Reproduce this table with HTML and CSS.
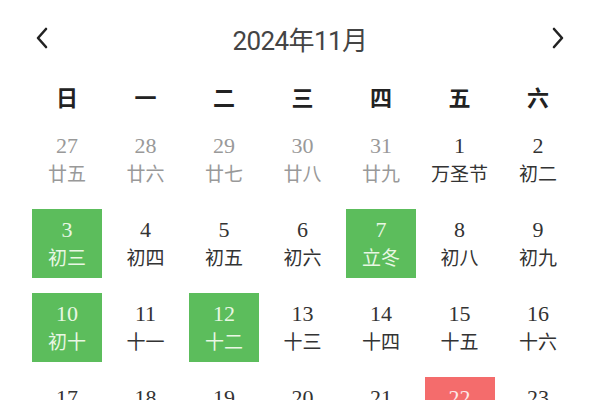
FILE: index.html
```html
<!DOCTYPE html>
<html lang="zh-CN">
<head>
<meta charset="utf-8">
<title>2024年11月</title>
<link rel="stylesheet" href="styles.css">
</head>
<body>
<div class="cal">
  <div class="head">
    <span class="nav"><svg width="14" height="22" viewBox="0 0 14 22"><polyline points="11,2 3,11 11,20" fill="none" stroke="#222" stroke-width="2.6" stroke-linecap="round" stroke-linejoin="round"/></svg></span>
    <span class="title">2024年11月</span>
    <span class="nav"><svg width="14" height="22" viewBox="0 0 14 22"><polyline points="3,2 11,11 3,20" fill="none" stroke="#222" stroke-width="2.6" stroke-linecap="round" stroke-linejoin="round"/></svg></span>
  </div>
  <div class="week">
    <span>日</span><span>一</span><span>二</span><span>三</span><span>四</span><span>五</span><span>六</span>
  </div>
  <div class="grid">
    <div class="cell other"><b>27</b><i>廿五</i></div>
    <div class="cell other"><b>28</b><i>廿六</i></div>
    <div class="cell other"><b>29</b><i>廿七</i></div>
    <div class="cell other"><b>30</b><i>廿八</i></div>
    <div class="cell other"><b>31</b><i>廿九</i></div>
    <div class="cell"><b>1</b><i>万圣节</i></div>
    <div class="cell"><b>2</b><i>初二</i></div>

    <div class="cell mark"><b>3</b><i>初三</i></div>
    <div class="cell"><b>4</b><i>初四</i></div>
    <div class="cell"><b>5</b><i>初五</i></div>
    <div class="cell"><b>6</b><i>初六</i></div>
    <div class="cell mark"><b>7</b><i>立冬</i></div>
    <div class="cell"><b>8</b><i>初八</i></div>
    <div class="cell"><b>9</b><i>初九</i></div>

    <div class="cell mark"><b>10</b><i>初十</i></div>
    <div class="cell"><b>11</b><i>十一</i></div>
    <div class="cell mark"><b>12</b><i>十二</i></div>
    <div class="cell"><b>13</b><i>十三</i></div>
    <div class="cell"><b>14</b><i>十四</i></div>
    <div class="cell"><b>15</b><i>十五</i></div>
    <div class="cell"><b>16</b><i>十六</i></div>

    <div class="cell"><b>17</b><i>十七</i></div>
    <div class="cell"><b>18</b><i>十八</i></div>
    <div class="cell"><b>19</b><i>十九</i></div>
    <div class="cell"><b>20</b><i>二十</i></div>
    <div class="cell"><b>21</b><i>廿一</i></div>
    <div class="cell today"><b>22</b><i>小雪</i></div>
    <div class="cell"><b>23</b><i>廿三</i></div>
  </div>
</div>
</body>
</html>
```
FILE: styles.css
```css
html, body {
  margin: 0;
  padding: 0;
  background: #fff;
  overflow: hidden;
}
body {
  font-family: "Noto Sans CJK SC", sans-serif;
  color: #333;
}
.cal {
  width: 600px;
  height: 400px;
  overflow: hidden;
}
.head {
  height: 76px;
  display: flex;
  align-items: center;
  justify-content: space-between;
  padding: 0 35px 0 35px;
}
.nav {
  display: flex;
  width: 14px;
  height: 22px;
}
.title {
  font-family: "Roboto", "Noto Sans CJK SC", sans-serif;
  font-size: 26px;
  color: #444;
  letter-spacing: -0.6px;
}
.week {
  height: 40px;
  display: grid;
  grid-template-columns: repeat(7, 70px);
  column-gap: 8.5px;
  padding-left: 32px;
  align-items: center;
}
.week span {
  text-align: center;
  font-size: 22px;
  font-weight: 700;
  color: #222;
}
.grid {
  margin-top: 9px;
  display: grid;
  grid-template-columns: repeat(7, 70px);
  grid-auto-rows: 69px;
  column-gap: 8.5px;
  row-gap: 15px;
  padding-left: 32px;
}
.cell {
  display: flex;
  flex-direction: column;
  align-items: center;
  justify-content: center;
  color: #333;
}
.cell b {
  font-family: "Liberation Serif", serif;
  font-weight: 400;
  font-size: 22px;
  line-height: 26px;
}
.cell i {
  font-style: normal;
  font-size: 19px;
  line-height: 28px;
  white-space: nowrap;
}
.cell.other {
  color: #999;
}
.cell.mark {
  background: #5cbd5c;
  color: #e9f7e4;
}
.cell.today {
  background: #f46c6c;
  color: #fde8e8;
}
```
